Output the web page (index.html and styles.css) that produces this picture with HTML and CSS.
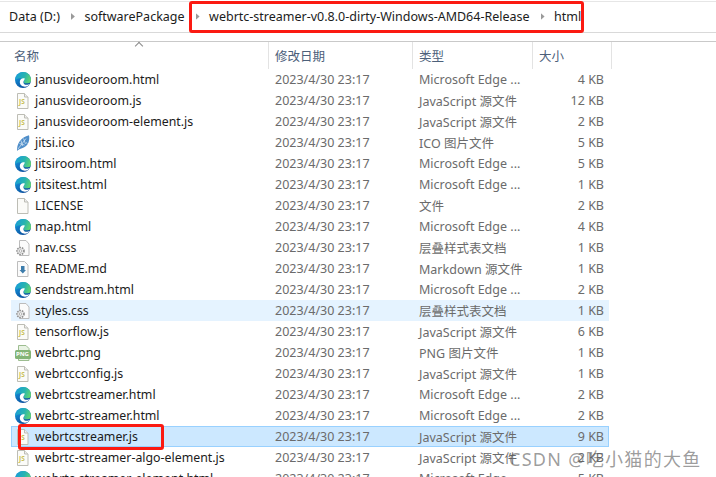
FILE: index.html
```html
<!DOCTYPE html>
<html lang="zh">
<head>
<meta charset="utf-8">
<title>html</title>
<link rel="stylesheet" href="styles.css">
</head>
<body>
<svg class="defs" width="0" height="0" aria-hidden="true">
  <defs>
    <linearGradient id="edgeA" x1="0.1" y1="0.2" x2="0.6" y2="1"><stop offset="0" stop-color="#1595dc"/><stop offset="1" stop-color="#0a4d9c"/></linearGradient>
    <linearGradient id="edgeB" x1="0" y1="0.3" x2="1" y2="0.6"><stop offset="0" stop-color="#1a9ed6"/><stop offset="0.55" stop-color="#27b3b0"/><stop offset="1" stop-color="#62d66f"/></linearGradient>
    <symbol id="edge" viewBox="0 0 16 16">
      <circle cx="8" cy="8" r="8" fill="url(#edgeA)"/>
      <path d="M2 3C4 1 6 0 8 0c4.500 0 8 3.500 8 8 0 2-1.300 3.300-3.300 3.300H9.200c0-3-2-5-4.700-5C3 6.300 1.500 7 .1 8.300.2 6.200 .8 4.500 2 3z" fill="url(#edgeB)"/>
      <path d="M9.800 6.400C7 5.700 4.800 7.300 4.800 10c0 2.700 2.200 4.700 5.200 4.700 2 0 3.600-1 4.600-2.700-.6.400-1.600.8-3 .8-1.900 0-3.200-1-3.200-2.600 0-1.200.9-2.100 1.400-3.800z" fill="#fff"/>
    </symbol>
    <symbol id="page" viewBox="0 0 16 16">
      <path d="M2.500.5h7l3.500 3.500v11.500H2.500z" fill="#fbfbf8" stroke="#bdbdb5"/>
      <path d="M9.500.5v3.500H13" fill="#eee" stroke="#bdbdb5"/>
    </symbol>
    <symbol id="gear" viewBox="0 0 16 16">
      <path d="M4.500.5h6.500l3 3.500v11.500h-9.500z" fill="#fbfbfb" stroke="#bcbcbc"/>
      <circle cx="5.500" cy="11" r="3.500" fill="#ececec" stroke="#8d8d8d" stroke-width="1.600" stroke-dasharray="1.500 1"/>
      <circle cx="5.500" cy="11" r="1.300" fill="#fff" stroke="#999" stroke-width=".7"/>
    </symbol>
    <symbol id="feather" viewBox="0 0 16 16">
      <path d="M2.200 16C1.200 9 6 2 14 .2c1 4.500-.3 11-7 13-1.800.5-3.600 1-4.800 2.800z" fill="#4f8ec9"/>
      <path d="M3 14 11 3.500M6 5.500l1.500 5.500M4.500 8.500l5 1.500M8.500 3.500l2 5.500M11 7.500l1.500 1" stroke="#cfe1f1" stroke-width=".8" fill="none"/>
    </symbol>
    <symbol id="md" viewBox="0 0 16 16">
      <path d="M2.500.5h7l3.500 3.500v11.500H2.500z" fill="#fbfbfb" stroke="#bdbdbd"/>
      <path d="M6 5h3.500v4H11l-3.200 3.500L4.500 9H6z" fill="#3c7cab"/>
    </symbol>
    <symbol id="png" viewBox="0 0 16 16">
      <path d="M3.500.5h7.500l3 3v12H3.500z" fill="#e9f3e4" stroke="#9dbd90"/>
      <rect x="0" y="5" width="16" height="9" rx="1.500" fill="#84b577"/>
    </symbol>
  </defs>
</svg>
<div class="window">
  <nav class="crumbs">
    <span class="crumb">Data (D:)</span><i class="sep"></i>
    <span class="crumb">softwarePackage</span><i class="sep"></i>
    <span class="crumb">webrtc-streamer-v0.8.0-dirty-Windows-AMD64-Release</span><i class="sep"></i>
    <span class="crumb">html</span>
  </nav>
  <div class="head">
    <div class="col-name hcell"><span class="caret"></span>名称</div>
    <div class="col-date hcell">修改日期</div>
    <div class="col-type hcell">类型</div>
    <div class="col-size hcell">大小</div>
  </div>
  <div class="rows">
    <div class="row"><span class="col-name name"><svg class="ic"><use href="#edge"/></svg>janusvideoroom.html</span><span class="col-date">2023/4/30 23:17</span><span class="col-type">Microsoft Edge ...</span><span class="col-size">4 KB</span></div>
    <div class="row"><span class="col-name name"><span class="js"><svg class="ic"><use href="#page"/></svg><b>JS</b></span>janusvideoroom.js</span><span class="col-date">2023/4/30 23:17</span><span class="col-type">JavaScript 源文件</span><span class="col-size">12 KB</span></div>
    <div class="row"><span class="col-name name"><span class="js"><svg class="ic"><use href="#page"/></svg><b>JS</b></span>janusvideoroom-element.js</span><span class="col-date">2023/4/30 23:17</span><span class="col-type">JavaScript 源文件</span><span class="col-size">2 KB</span></div>
    <div class="row"><span class="col-name name"><svg class="ic"><use href="#feather"/></svg>jitsi.ico</span><span class="col-date">2023/4/30 23:17</span><span class="col-type">ICO 图片文件</span><span class="col-size">5 KB</span></div>
    <div class="row"><span class="col-name name"><svg class="ic"><use href="#edge"/></svg>jitsiroom.html</span><span class="col-date">2023/4/30 23:17</span><span class="col-type">Microsoft Edge ...</span><span class="col-size">5 KB</span></div>
    <div class="row"><span class="col-name name"><svg class="ic"><use href="#edge"/></svg>jitsitest.html</span><span class="col-date">2023/4/30 23:17</span><span class="col-type">Microsoft Edge ...</span><span class="col-size">1 KB</span></div>
    <div class="row"><span class="col-name name"><svg class="ic"><use href="#page"/></svg>LICENSE</span><span class="col-date">2023/4/30 23:17</span><span class="col-type">文件</span><span class="col-size">2 KB</span></div>
    <div class="row"><span class="col-name name"><svg class="ic"><use href="#edge"/></svg>map.html</span><span class="col-date">2023/4/30 23:17</span><span class="col-type">Microsoft Edge ...</span><span class="col-size">4 KB</span></div>
    <div class="row"><span class="col-name name"><svg class="ic"><use href="#gear"/></svg>nav.css</span><span class="col-date">2023/4/30 23:17</span><span class="col-type">层叠样式表文档</span><span class="col-size">1 KB</span></div>
    <div class="row"><span class="col-name name"><svg class="ic"><use href="#md"/></svg>README.md</span><span class="col-date">2023/4/30 23:17</span><span class="col-type">Markdown 源文件</span><span class="col-size">1 KB</span></div>
    <div class="row"><span class="col-name name"><svg class="ic"><use href="#edge"/></svg>sendstream.html</span><span class="col-date">2023/4/30 23:17</span><span class="col-type">Microsoft Edge ...</span><span class="col-size">2 KB</span></div>
    <div class="row hover"><span class="col-name name"><svg class="ic"><use href="#gear"/></svg>styles.css</span><span class="col-date">2023/4/30 23:17</span><span class="col-type">层叠样式表文档</span><span class="col-size">1 KB</span></div>
    <div class="row"><span class="col-name name"><span class="js"><svg class="ic"><use href="#page"/></svg><b>JS</b></span>tensorflow.js</span><span class="col-date">2023/4/30 23:17</span><span class="col-type">JavaScript 源文件</span><span class="col-size">6 KB</span></div>
    <div class="row"><span class="col-name name"><span class="js png"><svg class="ic"><use href="#png"/></svg><b>PNG</b></span>webrtc.png</span><span class="col-date">2023/4/30 23:17</span><span class="col-type">PNG 图片文件</span><span class="col-size">1 KB</span></div>
    <div class="row"><span class="col-name name"><span class="js"><svg class="ic"><use href="#page"/></svg><b>JS</b></span>webrtcconfig.js</span><span class="col-date">2023/4/30 23:17</span><span class="col-type">JavaScript 源文件</span><span class="col-size">1 KB</span></div>
    <div class="row"><span class="col-name name"><svg class="ic"><use href="#edge"/></svg>webrtcstreamer.html</span><span class="col-date">2023/4/30 23:17</span><span class="col-type">Microsoft Edge ...</span><span class="col-size">2 KB</span></div>
    <div class="row"><span class="col-name name"><svg class="ic"><use href="#edge"/></svg>webrtc-streamer.html</span><span class="col-date">2023/4/30 23:17</span><span class="col-type">Microsoft Edge ...</span><span class="col-size">2 KB</span></div>
    <div class="row selected"><span class="col-name name"><span class="js"><svg class="ic"><use href="#page"/></svg><b>JS</b></span>webrtcstreamer.js</span><span class="col-date">2023/4/30 23:17</span><span class="col-type">JavaScript 源文件</span><span class="col-size">9 KB</span></div>
    <div class="row"><span class="col-name name"><span class="js"><svg class="ic"><use href="#page"/></svg><b>JS</b></span>webrtc-streamer-algo-element.js</span><span class="col-date">2023/4/30 23:17</span><span class="col-type">JavaScript 源文件</span><span class="col-size">2 KB</span></div>
    <div class="row"><span class="col-name name"><svg class="ic"><use href="#edge"/></svg>webrtc-streamer-element.html</span><span class="col-date">2023/4/30 23:17</span><span class="col-type">Microsoft Edge ...</span><span class="col-size">5 KB</span></div>
  </div>
  <div class="mark mark-path"></div>
  <div class="mark mark-file"></div>
  <div class="watermark">CSDN @吃小猫的大鱼</div>
</div>
</body>
</html>
```

FILE: styles.css
```css
* { box-sizing: border-box; }
html, body { margin: 0; padding: 0; background: #fff; }
.defs { position: absolute; }
.window {
  position: relative;
  width: 716px;
  height: 477px;
  overflow: hidden;
  background: #fff;
  font-family: "Noto Sans", "Noto Sans CJK SC", sans-serif;
  font-size: 12.5px;
  color: #6b6b6b;
}
.crumbs {
  display: flex;
  align-items: center;
  height: 32px;
  margin-top: 1px;
  padding-left: 9px;
  padding-bottom: 1px;
  border-top: 1px solid #e6e6e6;
  border-bottom: 1px solid #d9d9d9;
  color: #1c1c1c;
  font-size: 12.5px;
}
.crumb { white-space: nowrap; }
.sep {
  width: 4px;
  height: 7px;
  margin: 0 9.5px 0 11px;
  background: #9a9a9a;
  clip-path: polygon(0 0, 100% 50%, 0 100%);
}
.head {
  display: flex;
  height: 28px;
  margin-top: 8px;
  border-top: 1px solid #c9c9c9;
}
.hcell {
  position: relative;
  display: flex;
  align-items: center;
  height: 27px;
  border-right: 1px solid #e3e3e3;
  color: #4c607a;
}
.caret {
  position: absolute;
  left: 136px;
  top: 1px;
  width: 6px;
  height: 6px;
  border: 1px solid #8a8a8a;
  border-width: 1px 0 0 1px;
  transform: rotate(45deg);
}
.hcell.col-name { width: 269px; padding-left: 14px; }
.hcell.col-date { width: 144px; padding-left: 6px; }
.hcell.col-type { width: 120px; padding-left: 6px; }
.hcell.col-size { width: 79px; padding-left: 6px; }
.rows { display: flex; flex-direction: column; }
.row {
  display: flex;
  align-items: center;
  height: 21px;
  margin-left: 11px;
  width: 598px;
  white-space: nowrap;
}
.row.hover { background: #e5f3ff; }
.row.selected { background: #cce8ff; box-shadow: inset 0 0 0 1px #99d1ff; }
.row .col-name { width: 258px; }
.row .col-date { width: 144px; padding-left: 6px; }
.row .col-type { width: 116px; padding-left: 6px; }
.row .col-size { width: 75px; text-align: right; }
.name { display: flex; align-items: center; color: #1c1c1c; padding-left: 4px; font-size: 12.35px; }
.ic { width: 16px; height: 16px; flex: none; margin-right: 4px; }
.js { position: relative; display: flex; flex: none; }
.js b {
  position: absolute;
  left: 4px;
  top: 5px;
  font-size: 6.5px;
  line-height: 8px;
  font-weight: 700;
  color: #c9bf55;
}
.js.png b { left: 1px; top: 5px; font-size: 6px; line-height: 9px; color: #fff; }
.mark { position: absolute; border: 3px solid #fb1a12; border-radius: 3px; }
.mark-path { left: 189px; top: 1px; width: 394.5px; height: 32px; }
.mark-file { left: 18px; top: 424px; width: 146px; height: 26px; }
.watermark {
  position: absolute;
  left: 509px;
  top: 447px;
  font-size: 18px;
  line-height: 24px;
  letter-spacing: 1.3px;
  color: rgba(90, 90, 90, .6);
  white-space: nowrap;
}
```
